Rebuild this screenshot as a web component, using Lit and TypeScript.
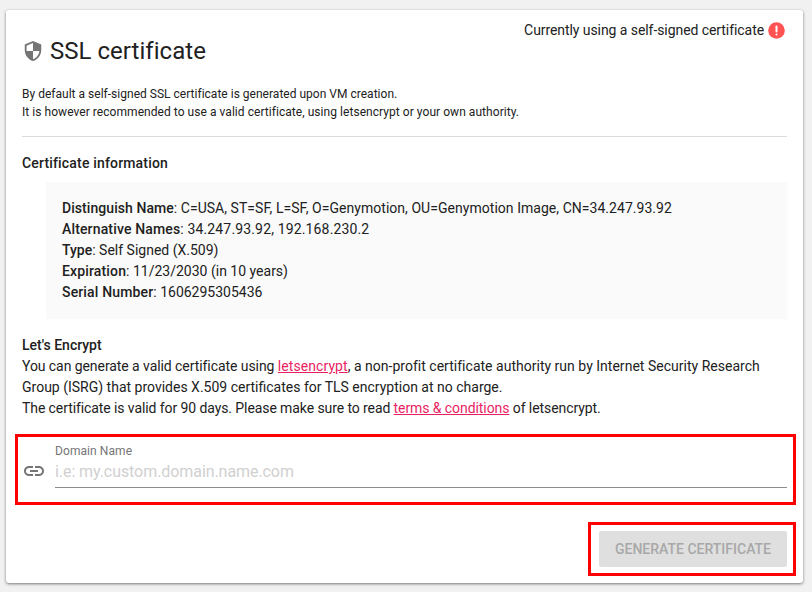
import { LitElement, html, css } from 'lit';
import { customElement } from 'lit/decorators.js';

@customElement('app-root')
export class AppRoot extends LitElement {
    static styles = css`
        :host {
            display: block;
            height: 592px;
            overflow: hidden;
            background: #f1f1f1;
            font-family: Roboto, sans-serif;
            font-size: 14px;
            color: #212121;
        }
        .card {
            position: relative;
            box-sizing: border-box;
            margin: 10px 0 0 6px;
            width: 797px;
            height: 573px;
            background: #fff;
            border-radius: 3px;
            box-shadow: 0 1px 3px rgba(0, 0, 0, 0.5);
            padding: 0 16px;
        }
        .status {
            position: absolute;
            top: 10px;
            right: 18px;
            display: flex;
            align-items: center;
            gap: 4px;
            line-height: 20px;
            letter-spacing: -0.07px;
        }
        .title {
            display: flex;
            align-items: center;
            gap: 6px;
            padding-top: 26px;
            height: 30px;
            font-size: 24px;
            line-height: 30px;
            letter-spacing: 0.03px;
        }
        .intro {
            margin: 19px 0 0;
            font-size: 12px;
            line-height: 18px;
        }
        hr {
            margin: 15px 0 0;
            border: 0;
            border-top: 1px solid #dcdcdc;
        }
        h2 {
            margin: 18px 0 0;
            font-size: 14px;
            line-height: 16px;
            font-weight: 500;
            letter-spacing: 0.17px;
        }
        .info {
            margin: 11px 0 0 24px;
            padding: 16px;
            background: #fafafa;
            line-height: 21px;
        }
        .info b, h3 {
            font-weight: 500;
        }
        h3 {
            margin: 16px 0 0;
            font-size: 14px;
            line-height: 21px;
        }
        .encrypt {
            line-height: 21px;
            white-space: nowrap;
        }
        a {
            color: #e91e63;
        }
        /* the reference has hinted glyph advances, these nudge each run back to its width */
        .t1 { letter-spacing: 0.014px; }
        .t2 { letter-spacing: 0.05px; }
        .k1 { letter-spacing: 0.06px; }
        .v1 { letter-spacing: 0.04px; }
        .k2 { letter-spacing: 0.15px; }
        .n1 { letter-spacing: -0.07px; }
        .n2 { letter-spacing: 0.08px; }
        .n3 { letter-spacing: 0.015px; }
        .n4 { letter-spacing: -0.09px; }
        .n5 { letter-spacing: -0.08px; }
        .field {
            display: flex;
            gap: 9px;
            margin-top: 25px;
        }
        .field svg {
            margin-top: 15px;
        }
        .input {
            flex: 1;
            height: 43px;
            border-bottom: 1px solid #8c8c8c;
        }
        .label {
            font-size: 12px;
            line-height: 14px;
            color: #757575;
            letter-spacing: 0.08px;
        }
        .placeholder {
            font-size: 16px;
            line-height: 28px;
            color: #d0d0d0;
            letter-spacing: -0.07px;
        }
        .actions {
            display: flex;
            justify-content: flex-end;
            margin-top: 43px;
        }
        button {
            width: 188px;
            height: 36px;
            padding: 0;
            border: 0;
            border-radius: 2px;
            background: #dfdfdf;
            color: #a8a8a8;
            font: 500 14px Roboto, sans-serif;
            text-transform: uppercase;
        }
        .mark {
            position: absolute;
            border: 3px solid #f00;
            pointer-events: none;
        }
        .mark.a { left: 9px; top: 424px; width: 775px; height: 65px; }
        .mark.b { left: 582px; top: 512px; width: 202px; height: 48px; }
    `;

    render() {
        return html`
            <div class="card">
                <div class="status">
                    Currently using a self-signed certificate
                    <svg width="17" height="17" viewBox="0 0 17 17">
                        <circle cx="8.5" cy="8.5" r="8.3" fill="#ff5252" />
                        <rect x="7.5" y="3.5" width="2" height="7" rx="1" fill="#fff" />
                        <rect x="7.5" y="11.5" width="2" height="2" rx="1" fill="#fff" />
                    </svg>
                </div>
                <div class="title">
                    <svg width="22" height="22" viewBox="0 0 24 24" fill="#757575">
                        <path d="M12 1 3 5v6c0 5.55 3.84 10.74 9 12 5.16-1.26 9-6.45 9-12V5l-9-4zm0 10.99h7c-.53 4.12-3.28 7.79-7 8.94V12H5V6.3l7-3.11v8.8z" />
                    </svg>
                    SSL certificate
                </div>
                <p class="intro">
                    <span class="t1">By default a self-signed SSL certificate is generated upon VM creation.</span><br />
                    <span class="t2">It is however recommended to use a valid certificate, using letsencrypt or your own authority.</span>
                </p>
                <hr />
                <h2>Certificate information</h2>
                <div class="info">
                    <div><b class="k1">Distinguish Name</b><span class="v1">: C=USA, ST=SF, L=SF, O=Genymotion, OU=Genymotion Image, CN=34.247.93.92</span></div>
                    <div><b class="k2">Alternative Names</b><span class="k2">: 34.247.93.92, 192.168.230.2</span></div>
                    <div><b>Type</b>: Self Signed (X.509)</div>
                    <div><b class="k2">Expiration</b>: 11/23/2030 (in 10 years)</div>
                    <div><b class="k2">Serial Number</b>: 1606295305436</div>
                </div>
                <h3>Let's Encrypt</h3>
                <div class="encrypt">
                    <div><span class="n1">You can generate a valid certificate using </span><a class="n2" href="#">letsencrypt</a><span class="n3">, a non-profit certificate authority run by Internet Security Research</span></div>
                    <div>Group (ISRG) that provides X.509 certificates for TLS encryption at no charge.</div>
                    <div><span class="n4">The certificate is valid for 90 days. Please make sure to read </span><a class="n5" href="#">terms &amp; conditions</a><span class="n5"> of letsencrypt.</span></div>
                </div>
                <div class="field">
                    <svg width="24" height="24" viewBox="0 0 24 24" fill="#757575">
                        <path d="M3.9 12c0-1.71 1.39-3.1 3.1-3.1h4V7H7c-2.76 0-5 2.24-5 5s2.24 5 5 5h4v-1.9H7c-1.71 0-3.1-1.39-3.1-3.1zM8 13h8v-2H8v2zm9-6h-4v1.9h4c1.71 0 3.1 1.39 3.1 3.1s-1.39 3.1-3.1 3.1h-4V17h4c2.76 0 5-2.24 5-5s-2.24-5-5-5z" />
                    </svg>
                    <div class="input">
                        <div class="label">Domain Name</div>
                        <div class="placeholder">i.e: my.custom.domain.name.com</div>
                    </div>
                </div>
                <div class="actions"><button disabled>Generate certificate</button></div>
                <div class="mark a"></div>
                <div class="mark b"></div>
            </div>
        `;
    }
}
